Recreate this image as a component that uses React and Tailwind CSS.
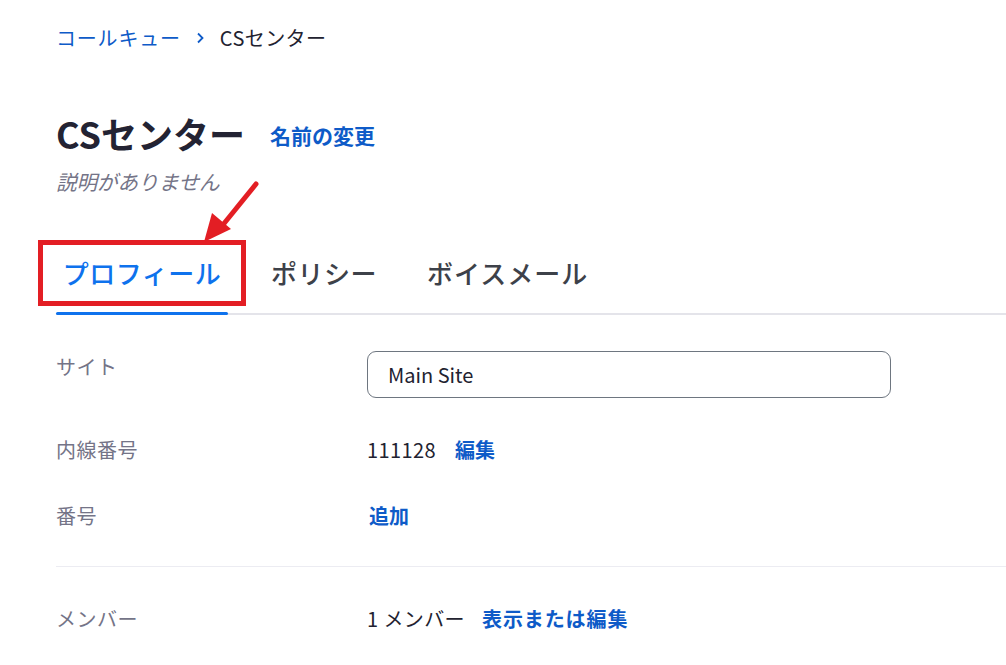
import React from "react";

const font = { fontFamily: '"Noto Sans CJK JP", "Noto Sans", sans-serif' };

function Row({ label, children, className = "", labelTop = "mt-0" }) {
  return (
    <div className={"flex items-start " + className}>
      <div className={"w-[311px] shrink-0 text-[20px] tracking-[0.5px] text-[#747487] leading-[28px] " + labelTop}>{label}</div>
      <div className="flex-1 flex items-center text-[20px] text-[#222230] leading-[28px]">{children}</div>
    </div>
  );
}

export default function App() {
  return (
    <div className="relative w-[1006px] h-[665px] bg-white overflow-hidden" style={font}>
      <div className="pl-[56px] pt-[24px]">
        {/* Breadcrumb */}
        <div className="flex items-center h-[28px] text-[20px] leading-[28px]">
          <span className="text-[#0e5bc8] tracking-[0.8px]">コールキュー</span>
          <svg className="ml-[14px] mr-[15px]" width="10" height="14" viewBox="0 0 10 14">
            <path d="M3 2.5 L7.5 7 L3 11.5" fill="none" stroke="#0e5bc8" strokeWidth="1.8" />
          </svg>
          <span className="text-[#222230] text-[20px] tracking-[0.4px]">CSセンター</span>
        </div>

        {/* Title */}
        <div className="flex items-center mt-[59px] h-[44px]">
          <h1 className="text-[36px] font-bold text-[#232333] leading-[44px]">CSセンター</h1>
          <span className="ml-[25px] mt-[6px] text-[21px] font-semibold text-[#0e5bc8]">名前の変更</span>
        </div>
        <div className="mt-[12px] text-[20.5px] italic text-[#747487] leading-[28px]">説明がありません</div>

        {/* Tabs */}
        <div className="mt-[36px] flex items-stretch border-b-[2px] border-[#e4e4ea] h-[84px]">
          <div className="relative w-[172px] flex items-center justify-center">
            <span className="text-[26px] font-medium text-[#0e72ed] tracking-[0.5px]">プロフィール</span>
            <div className="absolute left-0 right-0 bottom-[-2px] h-[3px] bg-[#0e72ed] rounded-full" />
          </div>
          <div className="flex items-center ml-[43px]">
            <span className="text-[26px] font-medium text-[#3d4149] tracking-[0.5px]">ポリシー</span>
          </div>
          <div className="flex items-center ml-[50px]">
            <span className="text-[26px] font-medium text-[#3d4149] tracking-[1px]">ボイスメール</span>
          </div>
        </div>

        {/* Rows */}
        <Row label="サイト" className="mt-[36px]" labelTop="mt-[2px]">
          <div className="w-[524px] h-[47px] border border-[#6e7680] rounded-[9px] flex items-center px-[20px]">
            <span className="text-[20px] text-[#222230]">Main Site</span>
          </div>
        </Row>
        <Row label="内線番号" className="mt-[38px]">
          <span className="tracking-[0.4px]">111128</span>
          <span className="ml-[19px] font-semibold text-[#0e5bc8]">編集</span>
        </Row>
        <Row label="番号" className="mt-[38px]">
          <span className="ml-[2px] font-semibold text-[#0e5bc8]">追加</span>
        </Row>

        <div className="mt-[36px] h-px bg-[#ececf2]" />

        <Row label="メンバー" className="mt-[38px]">
          <span className="tracking-[0.4px]">1 メンバー</span>
          <span className="ml-[17px] font-semibold text-[#0e5bc8] tracking-[0.9px]">表示または編集</span>
        </Row>
      </div>

      {/* Annotation: red box + arrow */}
      <div className="absolute left-[38px] top-[240px] w-[208px] h-[66px] border-[5px] border-[#e31e24]" />
      <svg className="absolute left-0 top-0 pointer-events-none" width="1006" height="665">
        <line x1="256" y1="184" x2="222" y2="226" stroke="#e31e24" strokeWidth="5" strokeLinecap="round" />
        <polygon points="204,242 212,213 231,229" fill="#e31e24" />
      </svg>
    </div>
  );
}
